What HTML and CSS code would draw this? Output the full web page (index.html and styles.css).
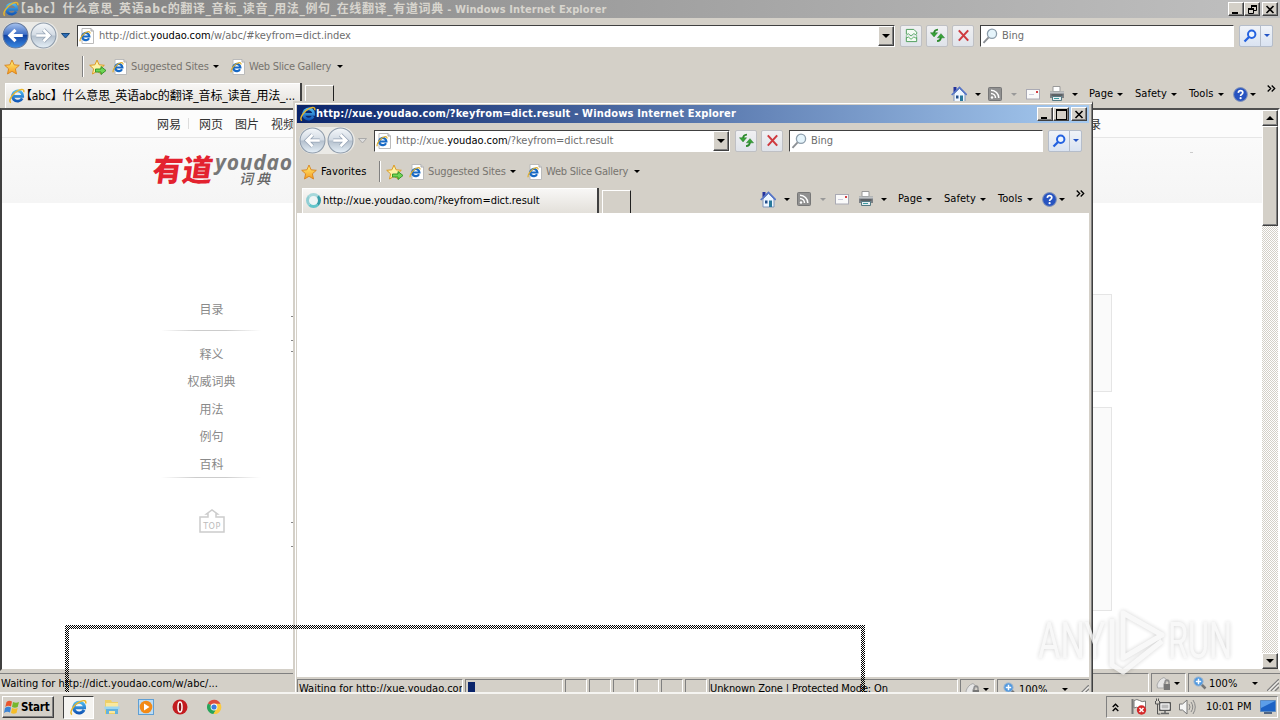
FILE: index.html
```html
<!DOCTYPE html>
<html lang="en">
<head>
<meta charset="utf-8">
<title>Windows Internet Explorer</title>
<link rel="stylesheet" href="styles.css">
</head>
<body>
<svg class="defs" width="0" height="0" aria-hidden="true">
  <defs>
    <linearGradient id="gBlue" x1="0" y1="0" x2="0" y2="1"><stop offset="0" stop-color="#a9c4ee"/><stop offset=".45" stop-color="#3f6fc6"/><stop offset=".5" stop-color="#1244a4"/><stop offset="1" stop-color="#3a8be4"/></linearGradient>
    <linearGradient id="gPale" x1="0" y1="0" x2="0" y2="1"><stop offset="0" stop-color="#f4f7fa"/><stop offset=".48" stop-color="#d3dbe4"/><stop offset=".52" stop-color="#b4c0cd"/><stop offset="1" stop-color="#e6f0f8"/></linearGradient>
    <linearGradient id="gStar" x1="0" y1="0" x2="0" y2="1"><stop offset="0" stop-color="#fff27a"/><stop offset="1" stop-color="#f79b1d"/></linearGradient>
    <linearGradient id="gE" x1="0" y1="0" x2="0" y2="1"><stop offset="0" stop-color="#4cb8f0"/><stop offset="1" stop-color="#1359b8"/></linearGradient>
    <symbol id="ie" viewBox="0 0 16 16">
      <path d="M13.2 10.3A5.1 5.1 0 1 1 13.7 8.3H4.4" fill="none" stroke="url(#gE)" stroke-width="2.8"/>
      <path d="M1.8 14.7C-1 12.6 3.6 4.8 10 2.2 13 1 15.600 1.300 14.700 4.200" fill="none" stroke="#e8b62c" stroke-width="1.400"/>
    </symbol>
    <symbol id="iepage" viewBox="0 0 16 16">
      <path d="M3 .5h9l2.500 2.500v12.500H3z" fill="#fff" stroke="#bbb"/><path d="M12 .5V3h2.500" fill="#ddd" stroke="#aaa"/>
      <path d="M10 10.200A3.600 3.600 0 1 1 10.400 8.500H4" fill="none" stroke="#1769c4" stroke-width="2.200"/>
      <path d="M1.300 13.300C0 11 4.500 5 8.500 3.800q3-.7 2.300 1.700" fill="none" stroke="#dfae2d" stroke-width="1.200"/>
    </symbol>
    <symbol id="back" viewBox="0 0 26 26"><circle cx="13" cy="13" r="12" fill="url(#gBlue)" stroke="#63779b"/><path d="M20 13H8M13 7.500L7.500 13l5.500 5.500" fill="none" stroke="#fff" stroke-width="3"/></symbol>
    <symbol id="backoff" viewBox="0 0 26 26"><circle cx="13" cy="13" r="12" fill="url(#gPale)" stroke="#8e9baa"/><path d="M20 13H8M13 7.500L7.500 13l5.500 5.500" fill="none" stroke="#95a3b5" stroke-width="4"/><path d="M20 13H8M13 7.500L7.500 13l5.500 5.500" fill="none" stroke="#fff" stroke-width="2.600"/></symbol>
    <symbol id="fwd" viewBox="0 0 26 26"><circle cx="13" cy="13" r="12" fill="url(#gPale)" stroke="#8e9baa"/><path d="M6 13h12M13 7.500l5.500 5.500-5.500 5.500" fill="none" stroke="#95a3b5" stroke-width="4"/><path d="M6 13h12M13 7.500l5.500 5.500-5.500 5.500" fill="none" stroke="#fff" stroke-width="2.600"/></symbol>
    <symbol id="star" viewBox="0 0 16 16"><path d="M8 1l2.100 4.800 5.200.5-3.900 3.500 1.100 5.200L8 12.300 3.500 15l1.100-5.200L.7 6.300l5.200-.5z" fill="url(#gStar)" stroke="#d8821c" stroke-width=".9"/></symbol>
    <symbol id="staradd" viewBox="0 0 18 16"><path d="M8 1l2.100 4.800 5.200.5-3.900 3.500 1.100 5.200L8 12.300 3.500 15l1.100-5.200L.7 6.300l5.200-.5z" fill="#fdf3a6" stroke="#dc9b25"/><path d="M6.500 10h5.500V7.500l5 4-5 4V13H6.500z" fill="#6fd653" stroke="#2c8f25" stroke-width=".9"/></symbol>
    <symbol id="compat" viewBox="0 0 14 16"><path d="M1.500 6.500V1.500h8l3 3v2M1.500 9v5.500h11V9" fill="#f3fbf3" stroke="#4a9b57"/><path d="M1 8l2.500-2 3 2.500 3-2.500L13 8M1 11.500l2.500-2 3 2.500 3-2.500 3.500 2" fill="none" stroke="#58a964"/></symbol>
    <symbol id="refresh" viewBox="0 0 16 16"><path d="M8.500 1.800Q4.500 2 4.300 6M7.500 14q4-.3 4.200-4.500" fill="none" stroke="#2d8a2d" stroke-width="2"/><path d="M.5 5h7.600L4.300 9.500zM7.900 10.500h7.600L11.700 6z" fill="#37a337" stroke="#23752a" stroke-width=".5"/></symbol>
    <symbol id="stop" viewBox="0 0 16 16"><path d="M3 2.500l10 11M13 2.500L3 13.500" stroke="#cf3a3f" stroke-width="2.200"/></symbol>
    <symbol id="lensgray" viewBox="0 0 16 16"><circle cx="10" cy="5.800" r="4.600" fill="#e5f4fb" stroke="#8d9eac" stroke-width="1.300"/><path d="M6.600 9.400L1.500 14.800" stroke="#8b8f94" stroke-width="1.900"/></symbol>
    <symbol id="lens" viewBox="0 0 14 14"><circle cx="8.700" cy="5.200" r="3.700" fill="#edf5ff" stroke="#2462e0" stroke-width="2"/><path d="M6 8L1.500 12.600" stroke="#2462e0" stroke-width="2.200"/></symbol>
    <symbol id="home" viewBox="0 0 16 17"><path d="M2.500 1h3v5h-3z" fill="#24329c"/><path d="M3 8l5.500-5.500L14 8v8H3z" fill="#eef6ff" stroke="#8297bb"/><path d="M.7 9L8.500 1.500 15.700 9" fill="none" stroke="#5675c8" stroke-width="1.700"/><path d="M5 9.500h2.500v3H5z" fill="#224e8b"/><path d="M9 9.500h3V16H9z" fill="#29799c"/></symbol>
    <symbol id="rss" viewBox="0 0 14 14"><rect x=".5" y=".5" width="13" height="13" rx="1" fill="#909090" stroke="#777"/><circle cx="4" cy="10.500" r="1.200" fill="#fff"/><path d="M3 6.500a4.500 4.500 0 0 1 4.500 4.500M3 3.200a7.800 7.800 0 0 1 7.800 7.800" fill="none" stroke="#fff" stroke-width="1.500"/></symbol>
    <symbol id="mail" viewBox="0 0 14 11"><rect x=".5" y=".5" width="13" height="9.500" fill="#fafafa" stroke="#aaaab4"/><path d="M10 2h2v2h-2z" fill="#d33d43"/><path d="M3 5.500h5" stroke="#ccd" /></symbol>
    <symbol id="printer" viewBox="0 0 16 16"><path d="M4 .5h7v5H4z" fill="#fff" stroke="#999"/><path d="M1 5.500h14V12H1z" fill="#7c8085"/><path d="M1 5.500h14v2H1z" fill="#bfc2c5"/><path d="M2.500 9h11" stroke="#3e4247"/><path d="M3.500 10.500h9v4h-9z" fill="#e6eef2" stroke="#557982"/><path d="M5 12.500h5" stroke="#3b9aa0"/></symbol>
    <symbol id="help" viewBox="0 0 15 15"><circle cx="7.500" cy="7.500" r="6.900" fill="#2753c0" stroke="#8494b8"/><path d="M5.300 5.900q.2-2.200 2.300-2.200t2.200 1.900q0 1.300-1.300 2-.9.500-.9 1.500" fill="none" stroke="#fff" stroke-width="1.700"/><circle cx="7.600" cy="11.200" r="1.100" fill="#fff"/></symbol>
    <symbol id="protect" viewBox="0 0 15 15"><path d="M1 9q2-6 7-7.500L12 5l-4 2v5H1.500z" fill="#e6e6e6" stroke="#a9a9a9"/><path d="M9 8V6.500q0-2.500 2-2.500t2 2.500V8" fill="none" stroke="#8d8d8d" stroke-width="1.400"/><path d="M7.800 8h6.200v6H7.800z" fill="#777"/></symbol>
    <symbol id="zoom" viewBox="0 0 14 14"><path d="M8.500 8.500l4 4" stroke="#777" stroke-width="2.500"/><circle cx="5.500" cy="5.500" r="4.600" fill="#5199df" stroke="#9bb4cf"/><path d="M5.500 2.800v5.400M2.800 5.500h5.400" stroke="#fff" stroke-width="1.500"/></symbol>
    <symbol id="grip" viewBox="0 0 12 12"><path d="M0 12L12 0M4 12l8-8M8 12l4-4" stroke="#808080" stroke-width="1.400"/><path d="M1.500 12L12 1.500M5.500 12L12 5.500" stroke="#fff"/></symbol>
  </defs>
</svg>

<div class="desktop">
  <section class="window window-back">
    <div class="titlebar inactive">
      <svg class="i16"><use href="#ie"/></svg>
      <span class="title-text title-cjk">【abc】什么意思_英语abc的翻译_音标_读音_用法_例句_在线翻译_有道词典<span class="suffix"> - Windows Internet Explorer</span></span>
      <span class="caption"><b class="min"></b><b class="restore"><svg viewBox="0 0 9 9"><path d="M3 0h6v2H3zM0 3h6v2H0z" fill="#000"/><path d="M3.500 1v2.500M8.500 1v4.500H6M.5 4v4.500h5V4" fill="none" stroke="#000"/></svg></b><b class="close"><svg viewBox="0 0 8 7"><path d="M.5 0l7 7M7.500 0l-7 7"/></svg></b></span>
    </div>
    <div class="navrow">
      <span class="orbs"><svg><use href="#back"/></svg><svg><use href="#fwd"/></svg></span>
      <svg class="recent" viewBox="0 0 9 6"><path d="M.5.5h8L4.500 5z" fill="#2d6db8" stroke="#174779"/></svg>
      <div class="field address"><svg class="i16"><use href="#iepage"/></svg><span class="url url-back">http://dict.<b>youdao.com</b>/w/abc/#keyfrom=dict.index</span><span class="drop"><i class="arrow"></i></span></div>
      <span class="tool"><svg><use href="#compat"/></svg></span>
      <span class="tool"><svg><use href="#refresh"/></svg></span>
      <span class="tool"><svg><use href="#stop"/></svg></span>
      <div class="field search"><svg class="i16"><use href="#lensgray"/></svg><span>Bing</span></div>
      <span class="go"><svg><use href="#lens"/></svg><i class="arrow blue"></i></span>
    </div>
    <div class="favrow">
      <svg class="i16"><use href="#star"/></svg><span class="favlabel">Favorites</span><i class="divider"></i>
      <svg class="staradd"><use href="#staradd"/></svg>
      <svg class="i16"><use href="#iepage"/></svg><span class="link sites">Suggested Sites</span><i class="arrow"></i>
      <svg class="i16 second"><use href="#iepage"/></svg><span class="link slices">Web Slice Gallery</span><i class="arrow"></i>
    </div>
    <div class="tabrow">
      <div class="tab"><svg class="i16"><use href="#ie"/></svg><span class="tab-cjk">【abc】什么意思_英语abc的翻译_音标_读音_用法_...</span></div>
      <div class="newtab"></div>
      <div class="commands">
        <svg class="home"><use href="#home"/></svg><i class="arrow"></i><svg class="rss"><use href="#rss"/></svg><i class="arrow dim"></i><svg class="mail"><use href="#mail"/></svg><svg class="i16"><use href="#printer"/></svg><i class="arrow"></i>
        <span>Page</span><i class="arrow"></i><span>Safety</span><i class="arrow"></i><span>Tools</span><i class="arrow"></i><svg class="help"><use href="#help"/></svg><i class="arrow"></i>
        <svg class="more" viewBox="0 0 9 7"><path d="M.7.5l3 3-3 3M4.700.5l3 3-3 3"/></svg>
      </div>
    </div>
    <div class="viewport">
      <div class="page">
        <div class="topnav"><span>网易</span><i></i><span>网页</span><span>图片</span><span>视频</span><span class="login">录</span></div>
        <div class="masthead">
          <span class="logo-cn">有道</span>
          <span class="logo-side"><em>youdao</em><small>词 典</small></span>
          <i class="speck"></i>
        </div>
        <div class="page-body">
          <nav class="toc">
            <span class="toc-head">目录</span><i class="rule"></i>
            <span>释义</span><span>权威词典</span><span>用法</span><span>例句</span><span>百科</span><i class="rule"></i>
            <svg class="top" viewBox="0 0 26 24"><path d="M1 23V8h8V5H7.500L13 1l5.500 4H17v3h8v15z" fill="none" stroke="#ccc" stroke-width="1.500"/><text x="13" y="19.500" text-anchor="middle">TOP</text></svg>
          </nav>
          <div class="residue"><i></i><i></i><i></i><i></i><i></i></div>
          <div class="cards"><div class="card one"></div><div class="card two"></div></div>
        </div>
      </div>
      <div class="scrollbar"><b><i class="arrow up"></i></b><b class="thumb"></b><span></span><b><i class="arrow"></i></b></div>
    </div>
    <div class="status">
      <span class="cell grow wait-back">Waiting for http://dict.youdao.com/w/abc/...</span>
      <span class="cell protect"><svg><use href="#protect"/></svg><i class="arrow"></i></span>
      <span class="cell zoomcell"><svg><use href="#zoom"/></svg><span>100%</span><i class="arrow"></i><svg class="grip"><use href="#grip"/></svg></span>
    </div>
  </section>

  <section class="window window-front">
    <div class="titlebar active">
      <svg class="i16"><use href="#ie"/></svg>
      <span class="title-text title-front">http://xue.youdao.com/?keyfrom=dict.result - Windows Internet Explorer</span>
      <span class="caption"><b class="min"></b><b class="max"></b><b class="close"><svg viewBox="0 0 8 7"><path d="M.5 0l7 7M7.500 0l-7 7"/></svg></b></span>
    </div>
    <div class="navrow">
      <span class="orbs"><svg><use href="#backoff"/></svg><svg><use href="#fwd"/></svg></span>
      <svg class="recent" viewBox="0 0 9 6"><path d="M.5.5h8L4.500 5z" fill="#ddd" stroke="#aaa"/></svg>
      <div class="field address"><svg class="i16"><use href="#iepage"/></svg><span class="url url-front">http://xue.<b>youdao.com</b>/?keyfrom=dict.result</span><span class="drop"><i class="arrow"></i></span></div>
      <span class="tool"><svg><use href="#refresh"/></svg></span>
      <span class="tool"><svg><use href="#stop"/></svg></span>
      <div class="field search"><svg class="i16"><use href="#lensgray"/></svg><span>Bing</span></div>
      <span class="go"><svg><use href="#lens"/></svg><i class="arrow blue"></i></span>
    </div>
    <div class="favrow">
      <svg class="i16"><use href="#star"/></svg><span class="favlabel">Favorites</span><i class="divider"></i>
      <svg class="staradd"><use href="#staradd"/></svg>
      <svg class="i16"><use href="#iepage"/></svg><span class="link sites">Suggested Sites</span><i class="arrow"></i>
      <svg class="i16 second"><use href="#iepage"/></svg><span class="link slices">Web Slice Gallery</span><i class="arrow"></i>
    </div>
    <div class="tabrow">
      <div class="tab"><i class="spinner"></i><span class="tab-front">http://xue.youdao.com/?keyfrom=dict.result</span></div>
      <div class="newtab"></div>
      <div class="commands">
        <svg class="home"><use href="#home"/></svg><i class="arrow"></i><svg class="rss"><use href="#rss"/></svg><i class="arrow dim"></i><svg class="mail"><use href="#mail"/></svg><svg class="i16"><use href="#printer"/></svg><i class="arrow"></i>
        <span>Page</span><i class="arrow"></i><span>Safety</span><i class="arrow"></i><span>Tools</span><i class="arrow"></i><svg class="help"><use href="#help"/></svg><i class="arrow"></i>
        <svg class="more" viewBox="0 0 9 7"><path d="M.7.5l3 3-3 3M4.700.5l3 3-3 3"/></svg>
      </div>
    </div>
    <div class="blank"></div>
    <div class="status">
      <span class="cell wait-front">Waiting for http://xue.youdao.com</span>
      <span class="cell progress"><i></i></span>
      <span class="cell tiny"></span><span class="cell tiny"></span><span class="cell tiny"></span><span class="cell tiny"></span><span class="cell tiny"></span><span class="cell tiny"></span>
      <span class="cell grow zone">Unknown Zone | Protected Mode: On</span>
      <span class="cell protect"><svg><use href="#protect"/></svg><i class="arrow"></i></span>
      <span class="cell zoomcell"><svg><use href="#zoom"/></svg><span>100%</span><i class="arrow"></i><svg class="grip"><use href="#grip"/></svg></span>
    </div>
  </section>

  <div class="drag-outline"><i></i><i></i><i></i></div>

  <svg class="watermark" viewBox="0 0 200 70">
    <text x="2" y="50" textLength="67" lengthAdjust="spacingAndGlyphs">ANY</text>
    <text x="132" y="50" textLength="64" lengthAdjust="spacingAndGlyphs">RUN</text>
    <path d="M87 5L126 27 87 50zM76 11v46l11 7 39-31" />
  </svg>

  <footer class="taskbar">
    <span class="start"><svg viewBox="0 0 16 16"><path d="M2.500 3Q5 1 8 2.500L7 7.500Q4 6 1.300 8z" fill="#e9562d"/><path d="M9 3q3 1.300 6 0l-1.300 5Q11 9.300 8 8z" fill="#76b72d"/><path d="M1 9q3-2 6-.5L6 13.500Q3 12 0 14z" fill="#3b84d5"/><path d="M8 9q3 1.300 5.700 0l-1.200 5Q9.500 15.300 7 14z" fill="#f5bd29"/></svg><b>Start</b></span>
    <span class="task"><svg class="ie-task"><use href="#ie"/></svg></span>
    <svg class="launch" viewBox="0 0 18 18"><path d="M2 2h6l1 2h6v12H2z" fill="#edcf69"/><path d="M3 5h12v10H3z" fill="#fae89d"/><path d="M1.500 8.500h15v3h-15z" fill="#9bd6f2"/><path d="M3 11v5h3v-3h6v3h3v-5" fill="#62b2df"/></svg>
    <svg class="launch" viewBox="0 0 18 18"><rect x="1.500" y="1.500" width="15" height="15" fill="#bcdcf4" stroke="#5f9fd4"/><circle cx="9" cy="9" r="6.300" fill="#f38a16"/><path d="M7 5.500v7l5.500-3.500z" fill="#fff"/></svg>
    <svg class="launch" viewBox="0 0 18 18"><circle cx="9" cy="9" r="7.500" fill="#c31c20"/><ellipse cx="9" cy="9" rx="2" ry="5" fill="#8d1014" stroke="#fff" stroke-width="1.500"/></svg>
    <svg class="launch" viewBox="0 0 18 18"><path d="M9 9L2.900 5.500A7 7 0 0 1 15.500 6z" fill="#dd4b3e"/><path d="M9 9h7a7 7 0 0 1-7.500 7L12 9z" fill="#fcca3e"/><path d="M9 9l3 1-3.500 6A7 7 0 0 1 2.900 5.500z" fill="#27a45a"/><path d="M9 5.700h6.400A7 7 0 0 1 8.500 16L12 10z" fill="#fcca3e"/><circle cx="9" cy="9" r="3.400" fill="#fff"/><circle cx="9" cy="9" r="2.600" fill="#3d7de0"/></svg>
    <div class="tray">
      <svg class="chev" viewBox="0 0 7 9"><path d="M.7 4l2.800-2.800L6.300 4M.7 8l2.800-2.800L6.300 8"/></svg>
      <svg class="flag" viewBox="0 0 18 18"><path d="M2.500 1v15" stroke="#777" stroke-width="2"/><path d="M4 2.500q3-2 5.500 0t6 .5v7q-3 1.500-6 0t-5.500 0z" fill="#fff" stroke="#777"/><circle cx="11.500" cy="12" r="4.700" fill="#d4292b"/><path d="M9.500 10l4 4M13.500 10l-4 4" stroke="#fff" stroke-width="1.500"/></svg>
      <svg class="net" viewBox="0 0 18 18"><path d="M5.500 4.500h11v8h-11z" fill="#999" stroke="#555"/><path d="M7 6h8v5H7z" fill="#bbb" stroke="#fff"/><path d="M7 15.500h8M11 13v2" stroke="#666" stroke-width="1.500"/><path d="M1.500 3v3h4V3M2.500.5V3M4.500.5V3M3.500 6v10h3" fill="none" stroke="#555"/></svg>
      <svg class="vol" viewBox="0 0 18 18"><path d="M1.500 6h3l4.500-4v14l-4.500-4h-3z" fill="#f5f5f5" stroke="#777"/><path d="M11 6q2 3 0 6M13 4q3.500 5 0 10M15 2q4.500 7 0 14" fill="none" stroke="#888"/></svg>
      <span class="clock">10:01 PM</span>
      <svg class="monitor" viewBox="0 0 16 14"><path d="M.5.5h15v11H.5z" fill="#1d63c5" stroke="#5d8bc0"/><path d="M1 1h14L1 8z" fill="#5c9ee8"/><path d="M4 13h8" stroke="#27436d" stroke-width="1.500"/></svg>
    </div>
  </footer>
</div>
</body>
</html>
```
FILE: styles.css
```css
* { box-sizing: border-box; }
body { margin: 0; font: 11px/14px "DejaVu Sans Condensed", "Noto Sans", "Noto Sans CJK SC", sans-serif; color: #000; }
svg { display: block; flex: none; overflow: visible; }
i { font-style: normal; }
.defs { position: absolute; }
.desktop { position: relative; width: 1280px; height: 720px; overflow: hidden; background: #d4d0c8; }
.window { position: absolute; display: flex; flex-direction: column; background: #d4d0c8; white-space: nowrap; overflow: hidden; }
.window-back { left: 0; top: 0; width: 1280px; height: 692px; }
.window-front { left: 293px; top: 101px; width: 800px; height: 591px; padding: 2px; border: 2px solid; border-color: #d4d0c8 #404040 #404040 #d4d0c8; border-right-width: 1px; padding-right: 3px; border-bottom: 0; padding-bottom: 0; box-shadow: inset 1px 1px #fff, inset -1px 0 #808080; }
.i16 { width: 16px; height: 16px; }
.arrow { display: block; flex: none; width: 0; height: 0; border: 3px solid transparent; border-top-color: #000; border-bottom: 0; }
.arrow.dim { border-top-color: #999; }
.arrow.blue { border-top-color: #2455c5; }
.arrow.up { border: 4px solid transparent; border-top: 0; border-bottom-color: #000; }

.titlebar { height: 18px; flex: none; display: flex; align-items: center; padding: 0 2px 0 3px; font-weight: bold; }
.inactive { background: linear-gradient(90deg, #808080, #c0c0c0); color: #d8d5ce; }
.active { background: linear-gradient(90deg, #0a246a, #a6caf0); color: #fff; }
.title-text { flex: 1; }
.title-cjk { margin-left: -5px; font-size: 12px; letter-spacing: .63px; }
.title-cjk .suffix { font-size: 11px; letter-spacing: .07px; }
.title-front { letter-spacing: .175px; }
.caption { display: flex; }
.caption b { display: flex; align-items: center; justify-content: center; width: 16px; height: 14px; background: #d4d0c8; border: 1px solid; border-color: #fff #404040 #404040 #fff; box-shadow: inset -1px -1px #808080; }
.caption .close { margin-left: 2px; }
.close svg { width: 8px; height: 7px; fill: none; stroke: #000; stroke-width: 1.6; }
.restore svg { width: 9px; height: 9px; }
.min::after { content: ""; width: 6px; height: 2px; background: #000; margin: 7px 3px 0 0; }
.max::after { content: ""; width: 9px; height: 8px; border: 1px solid #000; border-top-width: 2px; }

.navrow { height: 35px; flex: none; display: flex; align-items: center; padding-right: 7px; }
.orbs { display: flex; width: 56px; margin-left: 2px; gap: 1px; border-radius: 14px; background: #ebeae6; }
.orbs svg { width: 27px; height: 27px; }
.recent { width: 9px; height: 6px; margin: 0 11px 0 3px; }
.field { height: 22px; display: flex; align-items: center; background: #fff; border: 1px solid; border-color: #404040 #fff #fff #404040; color: #6d6d6d; }
.address { flex: 1; margin-left: -4px; padding-left: 1px; }
.address .url { flex: 1; margin-left: 4px; }
.url-back, .url-front { letter-spacing: -.04px; }
.url b { color: #000; font-weight: normal; }
.drop { width: 16px; height: 20px; display: flex; align-items: center; justify-content: center; background: #d4d0c8; border: 1px solid; border-color: #fff #404040 #404040 #fff; box-shadow: inset -1px -1px #808080; }
.drop .arrow { border-width: 4px 4px 0; }
.tool { width: 22px; height: 22px; margin-left: 4px; display: grid; place-items: center; border: 1px solid #bfc0c4; border-radius: 2px; background: linear-gradient(#f0f0f2, #dfe3ea); }
.address + .tool { margin-left: 5px; }
.tool svg { width: 15px; height: 15px; }
.search { width: 254px; margin-left: 6px; padding-left: 1px; gap: 4px; }
.go { margin-left: 5px; width: 34px; height: 22px; display: flex; align-items: center; border: 1px solid #b5bdca; border-radius: 2px; background: linear-gradient(90deg, transparent 20px, #b5bdca 20px, #b5bdca 21px, transparent 21px), linear-gradient(#f0f3f8, #dae3f1); }
.go svg { width: 14px; height: 14px; margin: 0 9px 0 3px; }
.go .arrow { margin-left: -2px; }

.favrow { height: 27px; flex: none; display: flex; align-items: center; padding-left: 4px; }
.favlabel { width: 46px; margin-left: 4px; letter-spacing: .1px; }
.divider { width: 2px; height: 21px; margin: 0 5px 0 12px; border-left: 1px solid #808080; border-right: 1px solid #fff; }
.staradd { width: 18px; height: 16px; margin-right: 5px; }
.link { color: #77746f; margin-left: 3px; }
.sites { width: 79px; letter-spacing: -.15px; }
.slices { width: 84px; letter-spacing: -.25px; }
.favrow .arrow { margin-left: 3px; }
.favrow .slices + .arrow { margin-left: 4px; }
.favrow .second { margin-left: 11px; }

.tabrow { height: 28px; flex: none; display: flex; align-items: flex-start; padding: 3px 0 0 5px; }
.tab { width: 297px; height: 25px; display: flex; align-items: center; padding-left: 4px; background: linear-gradient(#f9f8f7, #e3e0da); border-right: 2px solid #404040; box-shadow: inset 1px 1px #fff; overflow: hidden; }
.tab-cjk { margin-left: -5px; font-size: 12px; letter-spacing: -.16px; }
.tab-front { letter-spacing: -.06px; }
.spinner { width: 15px; height: 15px; margin-right: 2px; border: 3px solid #4cb5bd; border-color: #a6d8db #379da8 #62c5ca #91ced4; border-radius: 50%; flex: none; background: #eef5f5; }
.newtab { width: 29px; height: 23px; margin: 2px 0 0 3px; border: 1px solid #fff; border-width: 1px 1px 0; border-right: 1px solid #202020; }
.commands { margin-left: auto; height: 22px; display: grid; align-items: center; letter-spacing: .05px; grid-template-columns: 24px 13px 23px 15px 23px 23px 17px 28px 18px 36px 18px 29px 15px 17px 17px 13px; }
.home { width: 16px; height: 17px; }
.rss { width: 14px; height: 14px; }
.mail { width: 14px; height: 11px; }
.help { width: 15px; height: 15px; }
.more { width: 9px; height: 7px; margin-top: -12px; fill: none; stroke: #000; stroke-width: 1.3; }

.viewport { flex: 1; display: flex; border: 2px solid; border-color: #505050 #fff #d4d0c8 #404040; background: #fff; overflow: hidden; margin-bottom: 2px; }
.page { flex: 1; font: 12px/16px "Noto Sans CJK SC", sans-serif; display: flex; flex-direction: column; overflow: hidden; }
.topnav { height: 28px; flex: none; background: #fcfcfc; border-bottom: 1px solid #e6e6e6; display: flex; align-items: center; padding-left: 155px; gap: 12px; color: #333; }
.topnav i { width: 1px; height: 11px; background: #ddd; margin: 0 -2px 0 -5px; }
.login { margin-left: 782px; }
.masthead { height: 65px; flex: none; display: flex; padding: 11px 0 0 150px; background: linear-gradient(#fafafa, #f5f5f5); }
.logo-cn { width: 62px; font: 900 30px/38px "Noto Sans CJK SC", sans-serif; color: #e3222f; transform: skewX(-8deg); }
.logo-side { width: 84px; display: flex; flex-direction: column; }
.logo-side em { font: italic bold 21px/18px "Open Sans", sans-serif; color: #777; letter-spacing: .8px; margin: 4px 0 0 1px; }
.logo-side small { font: italic 500 14px/15px "Noto Sans CJK SC", sans-serif; color: #666; margin: 0 0 0 25px; }
.speck { width: 3px; height: 1px; background: #ccc; margin: 3px 0 0 892px; }
.page-body { flex: 1; display: flex; }
.toc { width: 100px; margin-left: 159px; padding-top: 92px; display: flex; flex-direction: column; align-items: center; color: #8a8a8a; line-height: 27.5px; }
.toc-head { margin-bottom: 7px; }
.toc-head + .rule { margin-bottom: 9px; }
.toc span { padding-left: 1px; }
.rule { width: 100px; height: 1px; flex: none; background: linear-gradient(90deg, transparent, #ccc 35%, #ccc 65%, transparent); }
.top { width: 26px; height: 24px; margin: 31px 0 0 1px; }
.top text { font: 9px "DejaVu Sans Condensed", sans-serif; fill: #bbb; letter-spacing: .5px; }
.residue { width: 2px; margin-left: 30px; padding-top: 113px; display: flex; flex-direction: column; }
.residue i { width: 2px; height: 1px; background: #888; margin-bottom: 23px; }
.residue i:nth-child(2) { margin-bottom: 10px; }
.residue i:nth-child(3) { margin-bottom: 170px; }
.cards { margin-left: 499px; width: 320px; padding-top: 91px; }
.card { border: 1px solid #e5e5e5; background: #fafafa; }
.one { height: 98px; margin-bottom: 15px; }
.two { height: 204px; }
.scrollbar { width: 16px; display: flex; flex-direction: column; background: repeating-conic-gradient(#fff 0 25%, #d4d0c8 0 50%) 0 0 / 2px 2px; }
.scrollbar b { height: 16px; display: grid; place-items: center; background: #d4d0c8; border: 1px solid; border-color: #fff #404040 #404040 #fff; box-shadow: inset -1px -1px #808080; }
.scrollbar b .arrow:not(.up) { border-width: 4px 4px 0; }
.scrollbar .thumb { height: 100px; }
.scrollbar span { flex: 1; }

.status { height: 19px; flex: none; display: flex; gap: 2px; }
.cell { height: 19px; flex: none; display: flex; align-items: center; border: 1px solid #808080; border-right-color: #fff; border-bottom: 0; overflow: hidden; }
.cell.grow { flex: 1; }
.wait-back { padding: 1px 0 0 1px; border-left: 0; letter-spacing: .05px; }
.protect { width: 35px; justify-content: space-between; padding: 0 5px 0 4px; }
.protect svg { width: 15px; height: 15px; }
.zoomcell { width: 92px; padding-left: 4px; border-right: 0; }
.zoomcell > svg:first-child { width: 14px; height: 14px; margin-right: 2px; }
.zoomcell > span { width: 43px; padding-top: 1px; }
.grip { width: 12px; height: 12px; margin: 4px 0 0 9px; }
.blank { flex: 1; background: #fff; margin-bottom: 2px; }
.window-front .status { height: 13px; overflow: hidden; }
.window-front .zoomcell { padding-left: 5px; }
.window-front .cell .arrow { margin-right: 0; }
.wait-front { width: 166px; padding-left: 1px; }
.progress { width: 98px; padding-left: 2px; }
.progress i { width: 7px; height: 14px; background: #0a246a; }
.tiny { width: 22px; }
.zone { letter-spacing: -.12px; }

.drag-outline { position: absolute; left: 65px; top: 625px; width: 800px; height: 67px; display: grid; grid-template: 4px 1fr / 4px 1fr 4px; }
.drag-outline i { background: repeating-conic-gradient(#000 0 25%, transparent 0 50%) 0 0 / 2px 2px; }
.drag-outline i:first-child { grid-column: 1 / 4; }
.drag-outline i:last-child { grid-column: 3; }

.watermark { position: absolute; left: 1036px; top: 608px; width: 200px; height: 70px; opacity: .8; filter: drop-shadow(0 0 2px rgba(0,0,0,.22)); }
.watermark text { font: 50px "Roboto", sans-serif; fill: #f7f7f7; }
.watermark path { fill: none; stroke: #f7f7f7; stroke-width: 5; stroke-linejoin: round; }

.taskbar { position: absolute; left: 0; top: 692px; width: 1280px; height: 28px; display: flex; align-items: center; padding: 2px 2px 0; background: #d4d0c8; box-shadow: inset 0 2px #f5f4f1; white-space: nowrap; }
.start { width: 52px; height: 22px; display: flex; align-items: center; padding-left: 1px; gap: 1px; border: 1px solid; border-color: #fff #404040 #404040 #fff; box-shadow: inset -1px -1px #808080; }
.start svg { width: 16px; height: 16px; }
.start b { font-size: 11.5px; letter-spacing: -.2px; }
.task { width: 31px; height: 23px; margin: 0 9px 0 9px; display: grid; place-items: center; background: #f5f4f1; border: 1px solid; border-color: #404040 #fff #fff #404040; }
.ie-task { width: 17px; height: 17px; }
.launch { width: 18px; height: 18px; margin-right: 16px; }
.tray { margin-left: auto; width: 172px; height: 22px; display: flex; align-items: center; border: 1px solid; border-color: #808080 #fff #fff #808080; }
.chev { width: 7px; height: 9px; margin: 0 11px 0 5px; fill: none; stroke: #000; stroke-width: 1.4; }
.flag, .net, .vol { width: 18px; height: 18px; margin-right: 6px; }
.clock { width: 47px; margin-left: 4px; letter-spacing: -.1px; }
.monitor { width: 16px; height: 14px; margin-left: auto; margin-right: 1px; }
```
